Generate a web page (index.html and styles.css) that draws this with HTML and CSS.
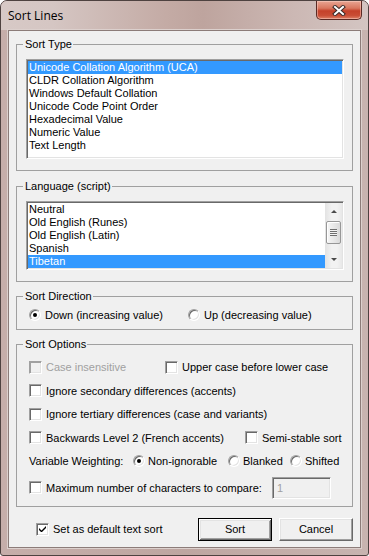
FILE: index.html
```html
<!DOCTYPE html>
<html>
<head>
<meta charset="utf-8">
<link rel="stylesheet" href="styles.css">
</head>
<body>
<div class="window">
  <div class="titlebar">
    <span class="title">Sort Lines</span>
    <div class="close">
      <svg width="14" height="11" viewBox="0 0 14 11">
        <path d="M3 2 L11 9 M11 2 L3 9" stroke="#3a2a28" stroke-width="4" stroke-linecap="square" fill="none"/>
        <path d="M3 2 L11 9 M11 2 L3 9" stroke="#ffffff" stroke-width="2" stroke-linecap="square" fill="none"/>
      </svg>
    </div>
  </div>
  <div class="client">
    <fieldset class="group g-type">
      <legend>Sort Type</legend>
      <div class="gbody">
        <div class="listbox lb-type">
          <div class="item sel">Unicode Collation Algorithm (UCA)</div>
          <div class="item">CLDR Collation Algorithm</div>
          <div class="item">Windows Default Collation</div>
          <div class="item">Unicode Code Point Order</div>
          <div class="item">Hexadecimal Value</div>
          <div class="item">Numeric Value</div>
          <div class="item">Text Length</div>
        </div>
      </div>
    </fieldset>

    <fieldset class="group g-lang">
      <legend>Language (script)</legend>
      <div class="gbody">
        <div class="listbox lb-lang">
          <div class="items">
            <div class="item">Neutral</div>
            <div class="item">Old English (Runes)</div>
            <div class="item">Old English (Latin)</div>
            <div class="item">Spanish</div>
            <div class="item sel">Tibetan</div>
          </div>
          <div class="scrollbar">
            <div class="sb-btn"><span class="arrow up"></span></div>
            <div class="thumb"><span class="grip"></span></div>
            <div class="sb-space"></div>
            <div class="sb-btn"><span class="arrow down"></span></div>
          </div>
        </div>
      </div>
    </fieldset>

    <fieldset class="group g-dir">
      <legend>Sort Direction</legend>
      <div class="gbody">
        <div class="row">
          <label class="opt w-down"><span class="rb on"></span>Down (increasing value)</label>
          <label class="opt"><span class="rb"></span>Up (decreasing value)</label>
        </div>
      </div>
    </fieldset>

    <fieldset class="group g-opt">
      <legend>Sort Options</legend>
      <div class="gbody opts">
        <div class="row">
          <label class="opt disabled w-case"><span class="cb dis"></span>Case insensitive</label>
          <label class="opt"><span class="cb"></span>Upper case before lower case</label>
        </div>
        <div class="row">
          <label class="opt"><span class="cb"></span>Ignore secondary differences (accents)</label>
        </div>
        <div class="row">
          <label class="opt"><span class="cb"></span>Ignore tertiary differences (case and variants)</label>
        </div>
        <div class="row">
          <label class="opt w-back"><span class="cb"></span>Backwards Level 2 (French accents)</label>
          <label class="opt"><span class="cb"></span>Semi-stable sort</label>
        </div>
        <div class="row">
          <span class="vw-label">Variable Weighting:</span>
          <label class="opt r-opt w-non"><span class="rb on"></span>Non-ignorable</label>
          <label class="opt r-opt w-blank"><span class="rb"></span>Blanked</label>
          <label class="opt r-opt"><span class="rb"></span>Shifted</label>
        </div>
        <div class="row row-max">
          <label class="opt w-max"><span class="cb"></span>Maximum number of characters to compare:</label>
          <div class="textbox">1</div>
        </div>
      </div>
    </fieldset>

    <div class="bottom">
      <label class="opt"><span class="cb checked">
        <svg width="7" height="7" viewBox="0 0 7 7"><path d="M0 2 L0 4 L2 6 L3 6 L7 2 L7 0 L2.5 4.5 Z" fill="#000"/></svg>
      </span>Set as default text sort</label>
      <div class="buttons">
        <button class="btn default">Sort</button>
        <button class="btn">Cancel</button>
      </div>
    </div>
  </div>
</div>
</body>
</html>
```

FILE: styles.css
```css
* { box-sizing: border-box; }
html, body { margin: 0; padding: 0; background: #fff; }
body {
  width: 369px;
  height: 556px;
  overflow: hidden;
  font-family: "Liberation Sans", Arial, sans-serif;
  font-size: 11px;
  color: #000;
}
.window {
  width: 369px;
  height: 556px;
  border: 1px solid #4e4240;
  border-radius: 7px 7px 3px 3px;
  background: linear-gradient(to right, #c6aeaa, #bea6a1 50%, #c8b4b0);
  display: flex;
  flex-direction: column;
}
.titlebar {
  height: 29px;
  flex: none;
  display: flex;
  align-items: flex-start;
  padding: 0 6px 0 7px;
  border-radius: 6px 6px 0 0;
  background: linear-gradient(to right, #d7c9c6 0%, #d5c6c3 14%, #c4aba5 45%, #bea49e 55%, #ccb8b4 80%, #d3c5c2 100%);
}
.title {
  font-family: "Open Sans", "Noto Sans", sans-serif;
  font-size: 12px;
  line-height: 16px;
  padding-top: 7px;
  color: #000;
}
.close {
  margin-left: auto;
  width: 46px;
  height: 19px;
  border: 1px solid #5a2a24;
  border-top: none;
  border-radius: 0 0 5px 5px;
  background: linear-gradient(to bottom, #e9a593 0%, #d9775f 40%, #c5412a 55%, #c94d35 80%, #de8066 100%);
  box-shadow: inset 0 0 0 1px rgba(255, 220, 210, 0.45);
  display: flex;
  align-items: center;
  justify-content: center;
}
.client {
  flex: 1;
  margin: 0 7px 7px 7px;
  background: #f0f0f0;
  border: 1px solid #8c7c79;
  box-shadow: 0 0 0 1px #dcd0cd;
  padding: 6px 7px 0 7px;
  display: flex;
  flex-direction: column;
}
.group {
  margin: 0;
  padding: 0;
  border: 1px solid #a0a0a0;
  min-width: 0;
}
.group legend {
  margin-left: 6px;
  padding: 0 1px 0 2px;
  line-height: 14px;
  font-size: 11px;
}
.g-type .gbody { padding: 8px 8px 11px 9px; }
.g-lang { margin-top: 8px; }
.g-lang .gbody { padding: 8px 8px 11px 9px; }
.g-dir { margin-top: 7px; }
.g-dir .gbody { padding: 4px 9px 6px 12px; }
.g-opt { margin-top: 7px; }
.g-opt .gbody { padding: 8px 9px 7px 12px; }

.listbox {
  background: #fff;
  border: 1px solid;
  border-color: #a0a0a0 #ffffff #ffffff #a0a0a0;
  box-shadow: inset 1px 1px 0 #696969, inset -1px -1px 0 #e3e3e3;
  padding: 1px;
}
.lb-type { height: 100px; }
.lb-lang { height: 69px; display: flex; }
.items { flex: 1; min-width: 0; }
.item {
  height: 13px;
  line-height: 13px;
  padding-left: 1px;
  white-space: nowrap;
  overflow: hidden;
}
.item.sel { background: #3399ff; color: #fff; }

.scrollbar {
  width: 17px;
  flex: none;
  display: flex;
  flex-direction: column;
  background: linear-gradient(to right, #e3e3e3, #f2f2f2 40%, #f2f2f2 70%, #e8e8e8);
}
.sb-btn {
  height: 17px;
  display: flex;
  align-items: center;
  justify-content: center;
}
.arrow { width: 0; height: 0; border-left: 3px solid transparent; border-right: 3px solid transparent; }
.arrow.up { border-bottom: 3px solid #4a4a4a; }
.arrow.down { border-top: 3px solid #4a4a4a; }
.thumb {
  height: 23px;
  margin: 1px 1px 0 1px;
  border: 1px solid #979797;
  border-radius: 2px;
  background: linear-gradient(to right, #f6f6f6, #e9e9e9 50%, #dadada);
  box-shadow: inset 1px 1px 0 #fff;
  display: flex;
  align-items: center;
  justify-content: center;
}
.grip {
  width: 7px;
  height: 7px;
  background: repeating-linear-gradient(to bottom, #6f6f6f 0 1px, #f4f4f4 1px 2px);
}
.sb-space { flex: 1; }

.row { display: flex; align-items: center; height: 16px; white-space: nowrap; }
.opt { display: flex; align-items: center; gap: 4px; white-space: nowrap; }
.opt.disabled { color: #a0a0a0; }
.w-down { width: 159px; }
.w-case { width: 136px; }
.w-back { width: 216px; }
.w-max { width: 243px; }
.w-non { width: 95px; }
.w-blank { width: 62px; }
.r-opt { gap: 3px; }
.vw-label { width: 104px; }

.opts { display: flex; flex-direction: column; gap: 7.5px; }
.row-max { height: 22px; }

.cb {
  width: 13px;
  height: 13px;
  flex: none;
  background: #fff;
  border: 1px solid;
  border-color: #a0a0a0 #ffffff #ffffff #a0a0a0;
  box-shadow: inset 1px 1px 0 #696969, inset -1px -1px 0 #e3e3e3;
  display: flex;
  align-items: center;
  justify-content: center;
}
.cb.dis { background: #f0f0f0; box-shadow: inset 1px 1px 0 #a0a0a0, inset -1px -1px 0 #e3e3e3; }
.rb {
  width: 12px;
  height: 12px;
  flex: none;
  border-radius: 50%;
  background: #fff;
  border: 1px solid;
  border-color: #a0a0a0 #ffffff #ffffff #a0a0a0;
  box-shadow: inset 1px 1px 0 #696969, inset -1px -1px 0 #e3e3e3;
  display: flex;
  align-items: center;
  justify-content: center;
}
.rb.on::after {
  content: "";
  width: 4px;
  height: 4px;
  border-radius: 50%;
  background: #000;
}
.textbox {
  width: 59px;
  height: 22px;
  border: 1px solid;
  border-color: #a0a0a0 #ffffff #ffffff #a0a0a0;
  box-shadow: inset 1px 1px 0 #696969, inset -1px -1px 0 #e3e3e3;
  background: #f0f0f0;
  color: #a0a0a0;
  padding: 3px 0 0 4px;
  line-height: 14px;
}

.bottom {
  margin-top: 11px;
  display: flex;
  align-items: center;
  padding: 0 0 0 20px;
}
.buttons { margin-left: auto; display: flex; gap: 7px; }
.btn {
  width: 74px;
  height: 23px;
  font-family: "Liberation Sans", Arial, sans-serif;
  font-size: 11px;
  color: #000;
  background: #f0f0f0;
  border: 1px solid;
  border-color: #ffffff #696969 #696969 #ffffff;
  box-shadow: inset -1px -1px 0 #a0a0a0, inset 1px 1px 0 #e3e3e3;
  padding: 0;
}
.btn.default {
  border: 1px solid #000;
  box-shadow: inset 1px 1px 0 #fff, inset -1px -1px 0 #696969, inset 2px 2px 0 #e3e3e3, inset -2px -2px 0 #a0a0a0;
}
```
